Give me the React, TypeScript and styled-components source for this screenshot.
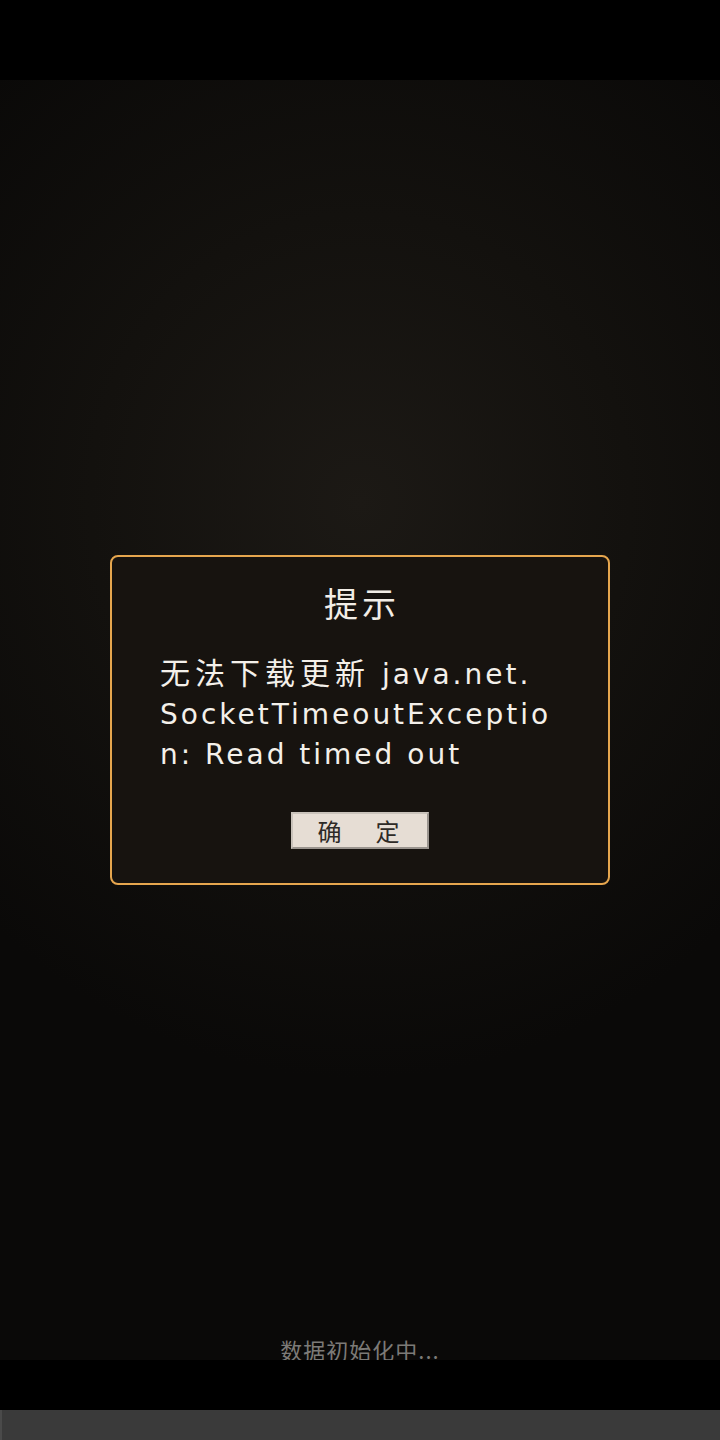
import React from 'react'
import styled, { createGlobalStyle } from 'styled-components'

const GlobalStyle = createGlobalStyle`
  html, body {
    margin: 0;
    padding: 0;
    background: #000;
  }
  #root {
    height: 1440px;
  }
`

const Screen = styled.div`
  display: flex;
  flex-direction: column;
  width: 720px;
  height: 1440px;
  background: #000;
  font-family: 'DejaVu Sans', 'Noto Sans CJK SC', sans-serif;
`

const StatusBar = styled.div`
  height: 80px;
  flex: none;
  background: #000;
`

const Stage = styled.div`
  flex: 1;
  display: grid;
  grid-template-rows: 1fr auto 1fr;
  justify-items: center;
  background: radial-gradient(ellipse 75% 45% at 50% 33%, #1c1915 0%, #13110e 50%, #0a0908 100%);
`

const Dialog = styled.div`
  grid-row: 2;
  box-sizing: border-box;
  width: 500px;
  padding: 26px 48px 34px;
  border: 2px solid #e6a64e;
  border-radius: 8px;
  background: #17130f;
  display: flex;
  flex-direction: column;
  align-items: center;
`

const Title = styled.div`
  font-size: 34px;
  line-height: 44px;
  letter-spacing: 4px;
  padding-left: 4px;
  color: #f2ede6;
`

const Message = styled.div`
  align-self: stretch;
  margin-top: 27px;
  color: #f4f0ea;
  font-size: 28px;
  line-height: 40px;
  letter-spacing: 3px;
  white-space: nowrap;
`

const Line = styled.div``

const Cjk = styled.span<{ $spacing: number }>`
  letter-spacing: ${p => p.$spacing}px;
  font-size: 30px;
`

const OkButton = styled.button`
  margin-top: 37px;
  box-sizing: border-box;
  width: 138px;
  height: 37px;
  padding: 0;
  border: 2px solid #9a948e;
  border-top-color: #c9c2ba;
  border-left-color: #c9c2ba;
  background: #e6ddd4;
  color: #2e2a26;
  font-family: 'Noto Sans CJK SC', sans-serif;
  font-size: 24px;
  line-height: 33px;
  letter-spacing: 5px;
  text-indent: 2px;
`

const Loading = styled.div`
  grid-row: 3;
  align-self: end;
  color: #7c7a77;
  font-family: 'Noto Sans CJK SC', sans-serif;
  font-size: 22px;
  line-height: 22px;
  letter-spacing: 1px;
`

const BottomGap = styled.div`
  height: 50px;
  flex: none;
  background: #000;
`

const NavBar = styled.div`
  height: 30px;
  flex: none;
  background: #3a3a3a;
  border-left: 2px solid #4a4a4a;
`

export default function App() {
  return (
    <>
      <GlobalStyle />
      <Screen>
        <StatusBar />
        <Stage>
          <Dialog>
            <Title>提示</Title>
            <Message>
              <Line>
                <Cjk $spacing={5}>无法下载更新</Cjk> java.net.
              </Line>
              <Line>SocketTimeoutExceptio</Line>
              <Line>n: Read timed out</Line>
            </Message>
            <OkButton>确　定</OkButton>
          </Dialog>
          <Loading>数据初始化中...</Loading>
        </Stage>
        <BottomGap />
        <NavBar />
      </Screen>
    </>
  )
}
